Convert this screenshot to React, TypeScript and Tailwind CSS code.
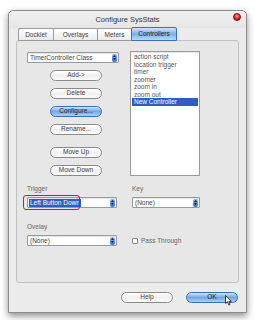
import React from 'react';

const font = "font-['Liberation_Sans',Arial,sans-serif]";

const Stepper: React.FC = () => (
  <span className="flex h-[8px] w-[5px] flex-col items-center justify-center gap-[1px] rounded-[2px] bg-gradient-to-b from-[#8fb8ef] to-[#2f6fd0]">
    <svg width="3" height="2" viewBox="0 0 3 2">
      <path d="M1.5 0 L3 2 L0 2 Z" fill="#0b1f47" />
    </svg>
    <svg width="3" height="2" viewBox="0 0 3 2">
      <path d="M0 0 L3 0 L1.5 2 Z" fill="#0b1f47" />
    </svg>
  </span>
);

const Select: React.FC<{ value: string; width: string; highlight?: boolean }> = ({ value, width, highlight }) => (
  <div
    className={`flex h-[11px] items-center justify-between rounded-[1px] border border-[#9a9a9a] bg-white pl-[1px] pr-[1px] shadow-[inset_0_1px_1px_rgba(0,0,0,0.12)] ${width}`}
  >
    {highlight ? (
      <span className="bg-[#2d5fc2] px-[1px] text-[6.5px] leading-[8px] text-white">{value}</span>
    ) : (
      <span className="pl-[1px] text-[6.5px] leading-[8px] text-[#444]">{value}</span>
    )}
    <Stepper />
  </div>
);

const PillButton: React.FC<{ label: string; primary?: boolean; className?: string }> = ({ label, primary, className = '' }) => (
  <div
    className={`flex h-[11px] w-[52px] items-center justify-center rounded-full border text-[6.5px] leading-none ${
      primary
        ? 'border-[#3b6fae] bg-gradient-to-b from-[#cfe3fb] via-[#6fa6ea] to-[#a9d1fb] text-[#222]'
        : 'border-[#8a8a8a] bg-gradient-to-b from-white via-[#f1f1f1] to-[#fafafa] text-[#444]'
    } ${className}`}
  >
    {label}
  </div>
);

const tabs = ['Docklet', 'Overlays', 'Meters', 'Controllers'];
const tabWidths = ['w-[35px]', 'w-[44px]', 'w-[34px]', 'w-[46px]'];
const listItems = ['action script', 'location trigger', 'timer', 'zoomer', 'zoom in', 'zoom out'];

const App: React.FC = () => {
  return (
    <div className={`h-[320px] w-[255px] bg-white pl-[8px] pt-[10px] ${font}`}>
      <div className="relative flex h-[303px] w-[239px] flex-col rounded-t-[5px] border border-[#8c8c8c] bg-[#ececec] shadow-[0_3px_7px_rgba(0,0,0,0.45)]">
        {/* title bar */}
        <div className="flex h-[17px] items-center justify-center rounded-t-[5px] bg-gradient-to-b from-[#f0f0f0] to-[#e6e6e6]">
          <span className="text-[7.5px] text-[#333]">Configure SysStats</span>
          <span className="absolute right-[5px] top-[2px] h-[8px] w-[8px] rounded-full border border-[#7a1010] bg-[radial-gradient(circle_at_50%_35%,#ff9a9a,#e02020_55%,#8a0000)]" />
        </div>

        {/* tabs */}
        <div className="relative z-10 ml-[9px] flex h-[13px]">
          {tabs.map((t, i) =>
            t === 'Controllers' ? (
              <div
                key={t}
                className={`${tabWidths[i]} -mt-[1px] flex h-[14px] items-center justify-center rounded-t-[2px] border border-[#3d70b0] bg-gradient-to-b from-[#cfe4fb] via-[#78b0ee] to-[#b7dafc] text-[6.5px] text-[#222]`}
              >
                {t}
              </div>
            ) : (
              <div
                key={t}
                className={`${tabWidths[i]} flex h-[13px] items-center justify-center border border-r-0 border-[#9c9c9c] bg-gradient-to-b from-white to-[#ebebeb] text-[6.5px] text-[#444] ${
                  i === 0 ? 'rounded-tl-[2px]' : ''
                }`}
              >
                {t}
              </div>
            )
          )}
        </div>

        {/* panel */}
        <div className="mx-[7px] -mt-[1px] flex h-[243px] flex-col rounded-[3px] border border-[#c2c2c2] bg-[#e7e7e7] pl-[10px]">
          <div className="mt-[11px] flex">
            <div className="flex w-[103px] flex-col">
              <Select value="TimerController Class" width="w-[92px]" />
              <div className="ml-[23px] mt-[7px] flex flex-col gap-[7px]">
                <PillButton label="Add->" />
                <PillButton label="Delete" />
                <PillButton label="Configure..." primary />
                <PillButton label="Rename..." />
                <PillButton label="Move Up" className="mt-[5px]" />
                <PillButton label="Move Down" />
              </div>
            </div>
            <div className="-mt-[1px] flex h-[125px] w-[70px] flex-col border border-[#9a9a9a] bg-white px-[1px] pt-[1px] shadow-[inset_0_1px_1px_rgba(0,0,0,0.1)]">
              {listItems.map((it) => (
                <span key={it} className="pl-[2px] text-[6.5px] leading-[7.5px] text-[#555]">
                  {it}
                </span>
              ))}
              <span className="bg-[#2d5fc2] pl-[2px] text-[6.5px] leading-[7.5px] text-white">New Controller</span>
            </div>
          </div>

          <div className="mt-[9px] flex">
            <div className="flex w-[104px] flex-col">
              <span className="text-[6.5px] leading-[8px] text-[#666]">Trigger</span>
              <div className="relative mt-[4px]">
                <Select value="Left Button Down" width="w-[90px]" highlight />
                <span className="absolute -left-[4px] -top-[2px] h-[15px] w-[57px] rounded-[3px] border-[1.5px] border-[#e0151b]" />
              </div>
              <span className="mt-[15px] text-[6.5px] leading-[8px] text-[#666]">Ovelay</span>
              <div className="mt-[4px]">
                <Select value="(None)" width="w-[90px]" />
              </div>
            </div>
            <div className="flex flex-col pl-[1px]">
              <span className="text-[6.5px] leading-[8px] text-[#666]">Key</span>
              <div className="mt-[4px]">
                <Select value="(None)" width="w-[68px]" />
              </div>
              <div className="mt-[29px] flex items-center gap-[3px]">
                <span className="h-[6px] w-[6px] rounded-[1px] border border-[#8a8a8a] bg-white" />
                <span className="text-[6.5px] leading-[8px] text-[#666]">Pass Through</span>
              </div>
            </div>
          </div>
        </div>

        {/* footer buttons */}
        <div className="relative mr-[8px] mt-[9px] flex justify-end gap-[13px]">
          <PillButton label="Help" className="w-[40px]" />
          <PillButton label="OK" primary className="w-[40px]" />
          <svg className="absolute right-[6px] top-[3px]" width="7" height="11" viewBox="0 0 7 11">
            <path d="M0.5 0.5 L0.5 8.5 L2.5 6.8 L3.8 10 L5 9.5 L3.8 6.4 L6.3 6.4 Z" fill="white" stroke="#111" strokeWidth="0.8" />
          </svg>
        </div>
      </div>
    </div>
  );
};

export default App;
